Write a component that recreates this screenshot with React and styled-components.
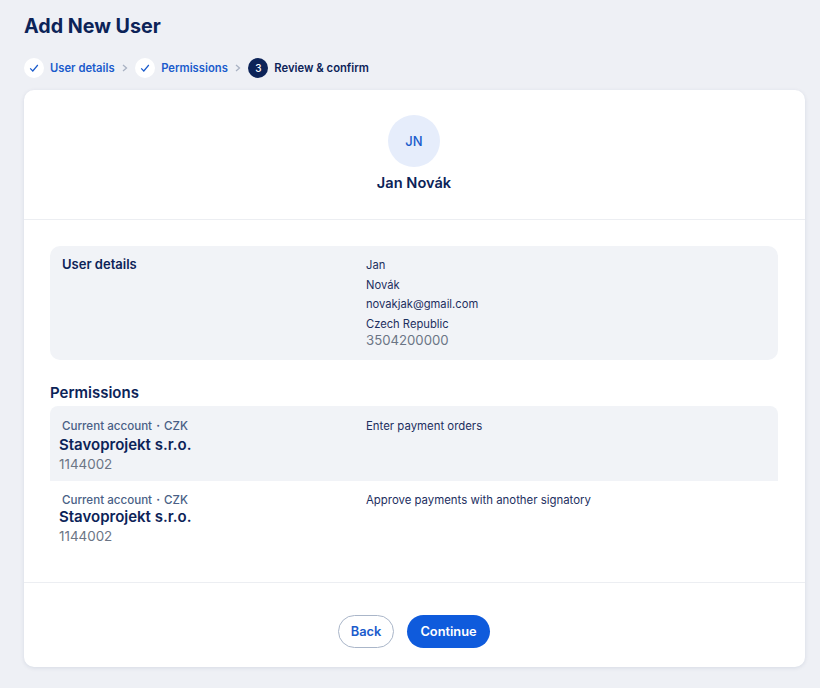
import React from 'react';
import styled, { createGlobalStyle } from 'styled-components';

const GlobalStyle = createGlobalStyle`
  html, body {
    margin: 0;
    padding: 0;
    background: #eef0f5;
    font-family: Inter, "Liberation Sans", sans-serif;
    color: #0c2358;
  }
`;

const Page = styled.div`
  width: 820px;
  height: 688px;
  box-sizing: border-box;
  padding: 14px 15px 0 24px;
  overflow: hidden;
`;

const Title = styled.h1`
  margin: 0;
  font-size: 19.7px;
  line-height: 24px;
  font-weight: 700;
`;

const Stepper = styled.ol`
  display: flex;
  align-items: center;
  list-style: none;
  margin: 20px 0 0;
  padding: 0;
  height: 20px;
`;

const Step = styled.li`
  display: flex;
  align-items: center;
  gap: 6px;
  font-size: 11.25px;
  font-weight: 600;
  color: ${(props) => (props.$active ? '#0c2358' : '#1a5bcc')};
`;

const StepCircle = styled.span`
  width: 20px;
  height: 20px;
  border-radius: 50%;
  display: flex;
  align-items: center;
  justify-content: center;
  font-size: 10px;
  font-weight: 500;
  background: ${(props) => (props.$active ? '#0c2358' : '#fff')};
  color: ${(props) => (props.$active ? '#fff' : '#1a5bcc')};
`;

const Chevron = styled.svg`
  width: 8px;
  height: 8px;
  margin: 0 6.5px 0 6px;
  fill: none;
  stroke: #a9b2c3;
  stroke-width: 1.3;
`;

const Card = styled.main`
  margin-top: 12px;
  height: 577px;
  background: #fff;
  border-radius: 10px;
  box-shadow: 0 1px 4px rgba(12, 35, 88, 0.1);
  display: flex;
  flex-direction: column;
`;

const Profile = styled.header`
  height: 130px;
  box-sizing: border-box;
  padding: 25px 1px 0 0;
  border-bottom: 1px solid #eceef2;
  display: flex;
  flex-direction: column;
  align-items: center;
`;

const Avatar = styled.div`
  width: 52px;
  height: 52px;
  border-radius: 50%;
  background: #e6edfb;
  color: #1a5bcc;
  display: flex;
  align-items: center;
  justify-content: center;
  font-size: 13px;
  font-weight: 500;
`;

const Name = styled.div`
  margin-top: 7px;
  font-size: 14.6px;
  line-height: 18px;
  font-weight: 600;
`;

const Body = styled.section`
  flex: 1;
  padding: 26px 27px 0 26px;
  border-bottom: 1px solid #eceef2;
`;

const DetailsPanel = styled.div`
  display: grid;
  grid-template-columns: 304px 1fr;
  height: 114px;
  box-sizing: border-box;
  padding: 10px 12px 0;
  background: #f1f3f7;
  border-radius: 10px;
`;

const PanelLabel = styled.div`
  margin-top: -1px;
  font-size: 13px;
  line-height: 18px;
  font-weight: 600;
`;

const ValueList = styled.div`
  display: flex;
  flex-direction: column;
  font-size: 11.2px;
  line-height: 19.5px;
  color: #1d2f5f;
`;

const Phone = styled.div`
  margin-top: -1px;
  font-size: 13.2px;
  line-height: 14px;
  color: #6b7585;
`;

const SectionTitle = styled.h2`
  margin: 24px 0 4px;
  font-size: 15px;
  line-height: 18px;
  font-weight: 600;
`;

const PermissionRow = styled.div`
  display: grid;
  grid-template-columns: 304px 1fr;
  height: ${(props) => (props.$shaded ? 75 : 74)}px;
  box-sizing: border-box;
  padding: ${(props) => (props.$shaded ? 13 : 12)}px 12px 0;
  background: ${(props) => (props.$shaded ? '#f1f3f7' : '#fff')};
  border-radius: ${(props) => (props.$shaded ? '8px 8px 0 0' : '0')};
`;

const AccountType = styled.div`
  font-size: 11.6px;
  line-height: 15px;
  font-weight: 500;
  color: #4a5f86;
`;

const AccountName = styled.div`
  margin: ${(props) => (props.$tight ? '-1px' : '1px')} 0 0 -3px;
  font-size: 15px;
  line-height: 19px;
  font-weight: 600;
  color: #0c2358;
`;

const AccountNumber = styled.div`
  margin: 2px 0 0 -3px;
  font-size: 13.4px;
  line-height: 16px;
  color: #6b7585;
`;

const PermissionText = styled.div`
  font-size: 11.4px;
  line-height: 15px;
  color: #1d2f5f;
`;

const Footer = styled.footer`
  height: 84px;
  box-sizing: border-box;
  padding: 32px 1px 0 0;
  display: flex;
  justify-content: center;
  gap: 13px;
`;

const Button = styled.button`
  height: 33px;
  padding: 0;
  width: ${(props) => (props.$primary ? '83px' : '56px')};
  box-sizing: border-box;
  border-radius: 17px;
  border: ${(props) => (props.$primary ? 'none' : '1px solid #aab6c9')};
  background: ${(props) => (props.$primary ? '#0f5bdc' : '#fff')};
  color: ${(props) => (props.$primary ? '#fff' : '#1a5bcc')};
  font-family: inherit;
  font-size: 12.8px;
  font-weight: 600;
`;

const Check = () => (
  <svg width="10" height="10" viewBox="0 0 10 10" fill="none" stroke="currentColor" strokeWidth="1.2">
    <path d="M1.2 5.4 L3.8 8 L8.8 2" />
  </svg>
);

const Arrow = () => (
  <Chevron viewBox="0 0 8 8">
    <path d="M2 1 L5.5 4 L2 7" />
  </Chevron>
);

const permissions = [
  { id: 1, text: 'Enter payment orders', shaded: true },
  { id: 2, text: 'Approve payments with another signatory', shaded: false },
];

const App = () => (
  <Page>
    <GlobalStyle />
    <Title>Add New User</Title>
    <Stepper>
      <Step>
        <StepCircle><Check /></StepCircle>
        User details
      </Step>
      <Arrow />
      <Step>
        <StepCircle><Check /></StepCircle>
        Permissions
      </Step>
      <Arrow />
      <Step $active>
        <StepCircle $active>3</StepCircle>
        Review &amp; confirm
      </Step>
    </Stepper>
    <Card>
      <Profile>
        <Avatar>JN</Avatar>
        <Name>Jan Novák</Name>
      </Profile>
      <Body>
        <DetailsPanel>
          <PanelLabel>User details</PanelLabel>
          <ValueList>
            <div>Jan</div>
            <div>Novák</div>
            <div>novakjak@gmail.com</div>
            <div>Czech Republic</div>
            <Phone>3504200000</Phone>
          </ValueList>
        </DetailsPanel>
        <SectionTitle>Permissions</SectionTitle>
        {permissions.map((item) => (
          <PermissionRow key={item.id} $shaded={item.shaded}>
            <div>
              <AccountType>Current account・CZK</AccountType>
              <AccountName $tight={!item.shaded}>Stavoprojekt s.r.o.</AccountName>
              <AccountNumber>1144002</AccountNumber>
            </div>
            <PermissionText>{item.text}</PermissionText>
          </PermissionRow>
        ))}
      </Body>
      <Footer>
        <Button>Back</Button>
        <Button $primary>Continue</Button>
      </Footer>
    </Card>
  </Page>
);

export default App;
